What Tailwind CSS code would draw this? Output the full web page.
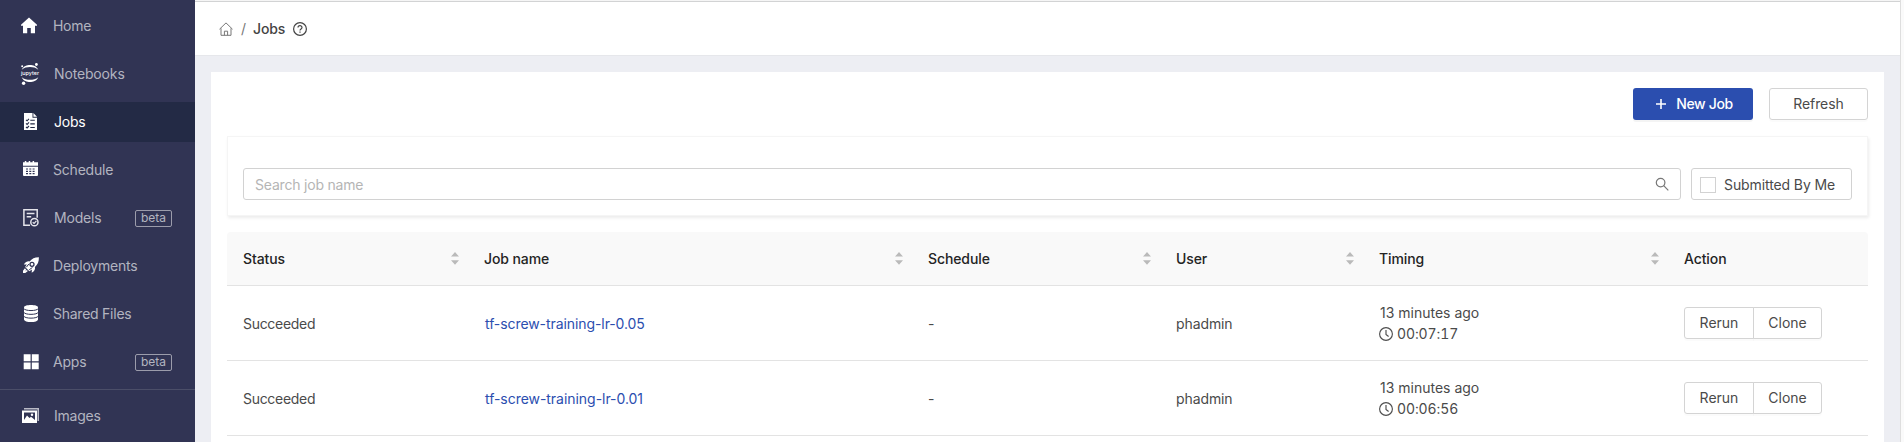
<!DOCTYPE html>
<html lang="en">
<head>
<meta charset="utf-8">
<title>Jobs</title>
<script src="https://cdn.jsdelivr.net/npm/@tailwindcss/browser@4"></script>
</head>
<body class="font-['Inter',sans-serif] text-sm text-[#4a4a4a] bg-[#edeef3]">
<svg class="hidden">
  <symbol id="sorter" viewBox="0 0 8 13"><path fill="#bababa" d="M4 0 8 4.600H0zM0 8.200h8L4 12.800z"/></symbol>
  <symbol id="clock" viewBox="0 0 14 14"><g fill="none" stroke="#4f4f4f" stroke-width="1.150"><circle cx="7" cy="7" r="6.400"/><path d="M7 3v4.500l2.600 2"/></g></symbol>
</svg>
<div class="flex h-[442px] w-[1904px] overflow-hidden">
  <nav class="flex w-[195px] shrink-0 flex-col bg-[#313454] pt-1.5 text-[#b3b4c0]">
    <a class="mb-2 flex h-10 shrink-0 items-center pl-5"><svg class="h-6 w-5 shrink-0" viewBox="0 0 20 24"><path fill="#fff" d="M9 3.500 17 10.700v1.100h-2V19.200h-4.200v-5.200H7.200v5.200H3v-7.400H1v-1.100z"/></svg><span class="ml-[13px] tracking-[-0.3px]">Home</span></a>
    <a class="mb-2 flex h-10 shrink-0 items-center pl-5"><svg class="h-6 w-5 shrink-0" viewBox="0 0 20 24"><g fill="#fff"><circle cx="16.400" cy="2.500" r="1.400"/><circle cx="2.200" cy="4.200" r="1"/><circle cx="3.600" cy="21.300" r="1.700"/><path d="M1.700 7.700C3.500 3.800 7 2.900 10 2.900s6.500.9 8.300 4.800C16 5.500 13 4.900 10 4.900s-6 .6-8.300 2.800zM1.700 15.200c1.800 3.900 5.300 4.700 8.300 4.700s6.500-.8 8.300-4.700c-2.300 2-5.300 2.600-8.300 2.600s-6-.6-8.300-2.600z"/><text x="1" y="12.500" font-size="5" font-weight="500" textLength="18" lengthAdjust="spacingAndGlyphs">jupyter</text></g></svg><span class="ml-[14px] tracking-[-0.15px]">Notebooks</span></a>
    <a class="mb-2 flex h-10 shrink-0 items-center bg-[#232a45] pl-5 text-white"><svg class="h-6 w-5 shrink-0" viewBox="0 0 20 24"><path fill="#fff" d="M4 3h8.500v4.700H17V20H4zM13.400 3 17 6.800h-3.600z"/><g fill="none" stroke="#232a45" stroke-width="1.100"><path d="m6 9.800 1.100 1 1.900-2M6 13.400l1.100 1 1.900-2M6 17l1.100 1L9 16M10.300 10.300h4.500M10.300 13.900h4.500M10.300 17.500h4.500"/></g></svg><span class="ml-[14px] tracking-[-0.25px]">Jobs</span></a>
    <a class="mb-2 flex h-10 shrink-0 items-center pl-5"><svg class="h-6 w-5 shrink-0" viewBox="0 0 20 24"><path fill="#fff" d="M3 4.300h1.800V3h1.500v1.300h2.400V3h1.500v1.300h2.400V3h1.500v1.300H18v3.400H3zM3 8.800h15V17a1 1 0 0 1-1 1H4a1 1 0 0 1-1-1z"/><path stroke="#313454" stroke-width="1.200" stroke-dasharray="2 1.300" d="M6 11h9M6 13.300h9M6 15.600h9"/></svg><span class="ml-[13px] tracking-[-0.2px]">Schedule</span></a>
    <a class="mb-2 flex h-10 shrink-0 items-center pl-5"><svg class="h-6 w-5 shrink-0" viewBox="0 0 20 24"><g fill="none" stroke="#e4e4ea" stroke-width="1.500"><path d="M10 19.300H3.900V3.800h13.300v8M6.700 7.500h7.800M6.700 10.700h4.500"/><circle cx="14.400" cy="16.200" r="3.600"/><path stroke-width="1.200" d="m12.700 16.200 1.400 1.300 2.300-2.700"/></g></svg><span class="ml-[14px] tracking-[-0.2px]">Models</span><span class="mr-[23px] ml-auto flex h-[17px] w-[37px] items-center justify-center rounded-xs border border-[#9b9cab] text-xs">beta</span></a>
    <a class="mb-2 flex h-10 shrink-0 items-center pl-5"><svg class="h-6 w-5 shrink-0" viewBox="0 0 20 24"><path fill="#fff" d="M18.900 3.200c-4.500 0-7 1.500-9.300 4.200-2-.4-4 .3-5.800 3.200l3-.2-1.700 2.600 4.300 4.300 2.500-1.700-.2 3.200c3-1.700 3.700-4 3.200-5.900 2.800-2.400 4.100-5.200 4-9.700zM4.900 14.200 3 16.700V19l2.300-.1 2.600-1.800-1.200-1-1.500 1.200 1-1.500z"/><circle cx="12" cy="10.300" r="2" fill="#fff" stroke="#313454" stroke-width="1.300"/><path d="m8.800 10-2.400 3.200M9.200 15.800l3.300-2.400" stroke="#313454"/></svg><span class="ml-[13px] tracking-[-0.2px]">Deployments</span></a>
    <a class="mb-2 flex h-10 shrink-0 items-center pl-5"><svg class="h-6 w-5 shrink-0" viewBox="0 0 20 24"><path fill="#fff" d="M4 5.500c0-3.200 14-3.200 14 0v12c0 3.400-14 3.400-14 0z"/><path fill="none" stroke="#313454" stroke-width="1" d="M3.500 6.300c1 3 14 3 15 0M3.500 10.100c1 3 14 3 15 0M3.500 13.900c1 3 14 3 15 0"/></svg><span class="ml-[13px] tracking-[-0.25px]">Shared Files</span></a>
    <a class="flex h-10 shrink-0 items-center pl-5"><svg class="h-6 w-5 shrink-0" viewBox="0 0 20 24"><path fill="#fff" d="M3.700 4.300h6.900v6.900H3.700zM11.800 4.300h6.900v6.900h-6.900zM3.700 12.400h6.900v6.900H3.700zM11.800 12.400h6.900v6.900h-6.900z"/></svg><span class="ml-[13px] tracking-[-0.2px]">Apps</span><span class="mr-[23px] ml-auto flex h-[17px] w-[37px] items-center justify-center rounded-xs border border-[#9b9cab] text-xs">beta</span></a>
    <div class="mt-[7px] mb-1.5 h-px shrink-0 bg-[#4b4e68]"></div>
    <a class="flex h-10 shrink-0 items-center pl-5"><svg class="h-6 w-5 shrink-0" viewBox="0 0 20 24"><path fill="#b9bac6" d="M4 4h15v13h-1.500V5.500H4z"/><path fill="#fff" fill-rule="evenodd" d="M2 6.500h15V19H2zM4 8.500v7.500h11V8.500z"/><path fill="#fff" d="m4 16 3-4.500 2.500 2.500 1.500-1.300L15 16z"/><circle cx="12" cy="10.800" r="1.200" fill="#fff"/></svg><span class="ml-[14px] tracking-[-0.25px]">Images</span></a>
  </nav>
  <div class="flex w-[1705px] shrink-0 flex-col">
    <header class="flex h-[56px] shrink-0 items-center border-t border-b border-b-[#e6e7eb] border-t-[#f5f5f5] bg-white pt-0.5 pl-6 shadow-[inset_0_1px_0_#d2d3d4]">
      <svg class="h-[14px] w-[14px]" viewBox="0 0 14 14" fill="none" stroke="#777" stroke-width="1"><path d="M.5 7.200 7 .9l6.500 6.300M2 6.300v7h10v-7M5.400 13.300V9.200h3.200v4.100"/></svg>
      <span class="ml-2 text-[#777]">/</span>
      <span class="ml-[7px] font-medium tracking-[-0.15px] text-[#444]">Jobs</span>
      <svg class="ml-2 h-[14px] w-[14px]" viewBox="0 0 14 14" fill="none" stroke="#444" stroke-width="1.200"><circle cx="7" cy="7" r="6.400"/><path d="M5 5.600C5 3 9 3 9 5.500 9 7 7 6.900 7 8.600M7 9.600v1.200"/></svg>
    </header>
    <main class="mt-4 ml-4 flex h-[400px] w-[1673px] flex-col bg-white px-4 pt-4">
      <div class="flex shrink-0 justify-end gap-4">
        <button class="flex h-8 w-[120px] items-center justify-center gap-[10px] rounded-[3px] bg-[#2b4eaf] pl-[3px] font-medium tracking-[-0.35px] text-white shadow-[0_2px_0_rgba(0,0,0,0.045)]"><svg class="h-[10px] w-[10px]" viewBox="0 0 10 10"><path stroke="#fff" stroke-width="1.600" d="M5 0v10M0 5h10"/></svg>New Job</button>
        <button class="h-8 w-[99px] rounded-[3px] border border-[#d4d4d4] tracking-[-0.1px] shadow-[0_2px_0_rgba(0,0,0,0.016)]">Refresh</button>
      </div>
      <div class="mt-4 flex h-20 shrink-0 gap-[10px] border border-[#f5f5f5] px-[15px] pt-[31px] shadow-[1px_2px_3px_rgba(0,0,0,0.08)]">
        <div class="flex h-8 w-[1438px] items-center justify-between rounded-[3px] border border-[#d2d2d2] pr-[11px] pl-[11px] text-[#b5b5b5]"><span class="pt-0.5 tracking-[-0.2px]">Search job name</span><svg class="h-[14px] w-[14px]" viewBox="0 0 14 14" fill="none" stroke="#777" stroke-width="1.200"><circle cx="5.600" cy="5.600" r="4.300"/><path d="m8.700 8.700 4.600 4.600"/></svg></div>
        <label class="flex h-8 w-[161px] items-center rounded-[3px] border border-[#d2d2d2] pt-px pl-2"><span class="h-4 w-4 border border-[#d2d2d2]"></span><span class="ml-2 pt-px tracking-[-0.1px]">Submitted By Me</span></label>
      </div>
      <table class="mt-4 w-[1641px] table-fixed border-separate border-spacing-0 text-left">
        <colgroup><col class="w-[241px]"><col class="w-[444px]"><col class="w-[248px]"><col class="w-[203px]"><col class="w-[305px]"><col class="w-[200px]"></colgroup>
        <thead>
          <tr class="h-[54px] text-[#242424] [&>th]:border-b [&>th]:border-[#e3e3e3] [&>th]:bg-[#f9f9f9] [&>th]:py-0 [&>th]:pl-4 [&>th]:pr-[9px] [&>th]:font-medium [&>th]:tracking-[-0.1px]">
            <th class="rounded-tl"><div class="flex items-center justify-between"><span>Status</span><svg class="h-[13px] w-2"><use href="#sorter"/></svg></div></th>
            <th><div class="flex items-center justify-between"><span>Job name</span><svg class="h-[13px] w-2"><use href="#sorter"/></svg></div></th>
            <th><div class="flex items-center justify-between"><span>Schedule</span><svg class="h-[13px] w-2"><use href="#sorter"/></svg></div></th>
            <th><div class="flex items-center justify-between"><span>User</span><svg class="h-[13px] w-2"><use href="#sorter"/></svg></div></th>
            <th><div class="flex items-center justify-between"><span>Timing</span><svg class="h-[13px] w-2"><use href="#sorter"/></svg></div></th>
            <th class="rounded-tr">Action</th>
          </tr>
        </thead>
        <tbody>
          <tr class="h-[75px] [&>td]:border-b [&>td]:border-[#e3e3e3] [&>td]:py-0 [&>td]:pl-4">
            <td><div class="pt-0.5 tracking-[-0.3px]">Succeeded</div></td><td class="text-[#2b4eaf]"><div class="pt-0.5 pl-px tracking-[-0.08px]">tf-screw-training-lr-0.05</div></td><td><div class="pt-0.5">-</div></td><td><div class="pt-0.5 tracking-[-0.1px]">phadmin</div></td>
            <td><div class="pl-px leading-[21px]">13 minutes ago</div><div class="flex items-center gap-1 leading-[21px] tabular-nums"><svg class="mt-px h-[14px] w-[14px]"><use href="#clock"/></svg><span class="tracking-[-0.1px]">00:07:17</span></div></td>
            <td><div class="flex"><button class="h-8 w-[70px] rounded-l-[3px] border border-[#d4d4d4] shadow-[0_2px_0_rgba(0,0,0,0.016)]">Rerun</button><button class="-ml-px h-8 w-[69px] rounded-r-[3px] border border-[#d4d4d4] shadow-[0_2px_0_rgba(0,0,0,0.016)]">Clone</button></div></td>
          </tr>
          <tr class="h-[75px] [&>td]:border-b [&>td]:border-[#e3e3e3] [&>td]:py-0 [&>td]:pl-4">
            <td><div class="pt-0.5 tracking-[-0.3px]">Succeeded</div></td><td class="text-[#2b4eaf]"><div class="pt-0.5 pl-px tracking-[-0.04px]">tf-screw-training-lr-0.01</div></td><td><div class="pt-0.5">-</div></td><td><div class="pt-0.5 tracking-[-0.1px]">phadmin</div></td>
            <td><div class="pl-px leading-[21px]">13 minutes ago</div><div class="flex items-center gap-1 leading-[21px] tabular-nums"><svg class="mt-px h-[14px] w-[14px]"><use href="#clock"/></svg><span class="tracking-[-0.1px]">00:06:56</span></div></td>
            <td><div class="flex"><button class="h-8 w-[70px] rounded-l-[3px] border border-[#d4d4d4] shadow-[0_2px_0_rgba(0,0,0,0.016)]">Rerun</button><button class="-ml-px h-8 w-[69px] rounded-r-[3px] border border-[#d4d4d4] shadow-[0_2px_0_rgba(0,0,0,0.016)]">Clone</button></div></td>
          </tr>
        </tbody>
      </table>
    </main>
  </div>
  <div class="w-1 shrink-0 border-l border-[#dedede] bg-[#fafafa]"></div>
</div>
</body>
</html>
